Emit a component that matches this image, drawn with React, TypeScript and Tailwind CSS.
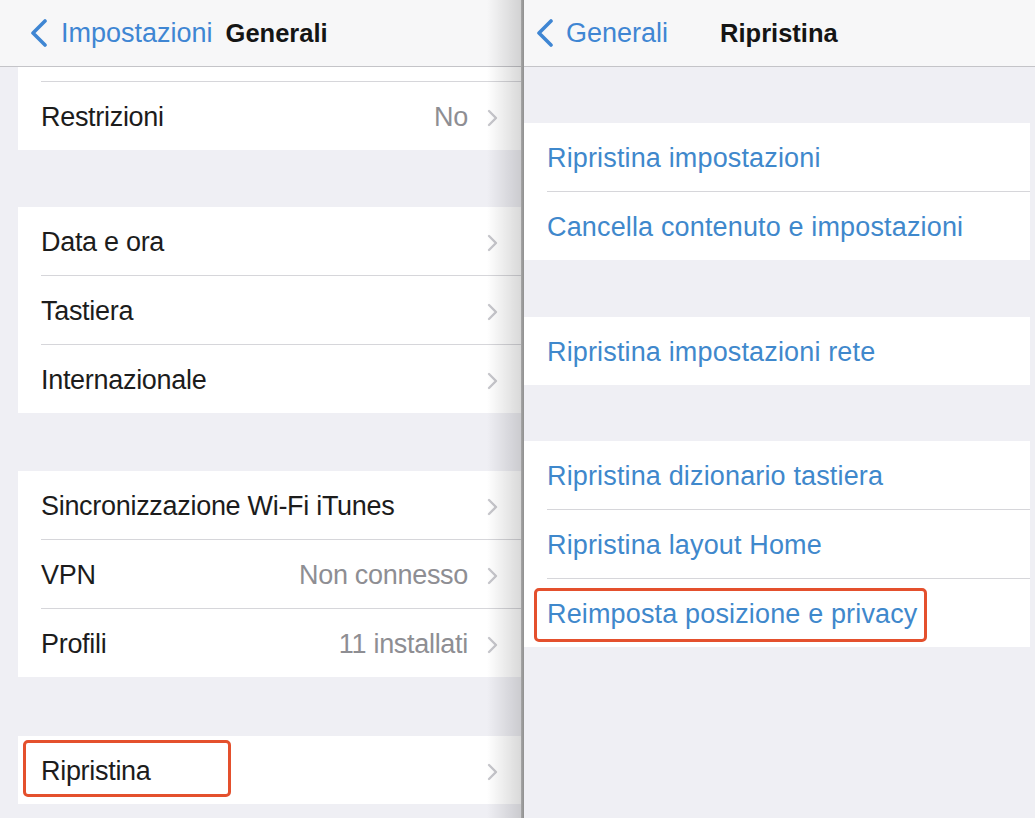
import React from 'react';

const font = { fontFamily: '"Liberation Sans", Arial, sans-serif' };

const Chevron = () => (
    <svg width="11" height="18" viewBox="0 0 11 18" className="shrink-0">
        <polyline points="2,2 9,9 2,16" fill="none" stroke="#c7c7cc" strokeWidth="2.4" strokeLinecap="round" strokeLinejoin="round" />
    </svg>
);

const BackChevron = () => (
    <svg width="18" height="28" viewBox="0 0 18 28" className="shrink-0">
        <polyline points="15,2 3,14 15,26" fill="none" stroke="#3f86d3" strokeWidth="3.6" strokeLinecap="round" strokeLinejoin="round" />
    </svg>
);

const Sep = ({ inset }: { inset: string }) => (
    <div className={`h-px bg-white ${inset}`}>
        <div className="h-px bg-[#d6d6da]" />
    </div>
);

interface RowProps {
    label: string;
    value?: string;
    boxed?: boolean;
}

const SettingRow: React.FC<RowProps> = ({ label, value, boxed }) => (
    <div className="relative flex h-[68px] items-center bg-white pl-[23px] pr-[23px] pt-[3px]">
        <span className="flex-1 text-[27px] text-[#1c1c1c] tracking-[-0.3px]">{label}</span>
        {value && <span className="mr-[19px] text-[27px] text-[#8e8e93] tracking-[-0.3px]">{value}</span>}
        <Chevron />
        {boxed && (
            <div className="absolute left-[5px] top-[4px] h-[57px] w-[208px] rounded-[5px] border-[3px] border-[#e4502d]" />
        )}
    </div>
);

const ActionRow: React.FC<RowProps> = ({ label, boxed }) => (
    <div className="relative flex h-[68px] items-center bg-white pl-[23px] pt-[2px]">
        <span className="text-[27px] text-[#3f88cc] tracking-[0.15px]">{label}</span>
        {boxed && (
            <div className="absolute left-[10px] top-[9px] h-[54px] w-[393px] rounded-[5px] border-[3px] border-[#e4502d]" />
        )}
    </div>
);

export default function App() {
    return (
        <div className="flex h-[818px] w-[1035px] overflow-hidden bg-[#efeff4]" style={font}>
            {/* left screen */}
            <div className="relative flex w-[521px] flex-col">
                <div className="flex h-[67px] items-center border-b border-[#c4c4c8] bg-[#f7f7f8] pl-[30px]">
                    <BackChevron />
                    <span className="ml-[13px] text-[27px] text-[#3f86d3]">Impostazioni</span>
                    <span className="ml-[13px] text-[25.5px] font-bold text-[#151515]">Generali</span>
                </div>
                <div className="flex flex-col pl-[18px]">
                    <div className="h-[14px] bg-white" />
                    <Sep inset="pl-[23px]" />
                    <SettingRow label="Restrizioni" value="No" />
                    <div className="h-[57px]" />
                    <SettingRow label="Data e ora" />
                    <Sep inset="pl-[23px]" />
                    <SettingRow label="Tastiera" />
                    <Sep inset="pl-[23px]" />
                    <SettingRow label="Internazionale" />
                    <div className="h-[58px]" />
                    <SettingRow label="Sincronizzazione Wi-Fi iTunes" />
                    <Sep inset="pl-[23px]" />
                    <SettingRow label="VPN" value="Non connesso" />
                    <Sep inset="pl-[23px]" />
                    <SettingRow label="Profili" value="11 installati" />
                    <div className="h-[59px]" />
                    <SettingRow label="Ripristina" boxed />
                </div>
                {/* shadow cast by the incoming screen */}
                <div className="pointer-events-none absolute right-0 top-0 h-full w-[34px] bg-gradient-to-r from-transparent to-black/15" />
            </div>
            <div className="w-[3px] bg-gradient-to-r from-[#a6a6a6] to-[#8f8f8f]" />

            {/* right screen */}
            <div className="flex flex-1 flex-col">
                <div className="relative flex h-[67px] items-center border-b border-[#c4c4c8] bg-[#f7f7f8] pl-[12px]">
                    <BackChevron />
                    <span className="ml-[12px] text-[27px] text-[#3f86d3]">Generali</span>
                    <span className="ml-[52px] text-[25.5px] font-bold text-[#151515]">Ripristina</span>
                </div>
                <div className="flex flex-col pr-[5px]">
                    <div className="h-[56px]" />
                    <ActionRow label="Ripristina impostazioni" />
                    <Sep inset="pl-[23px]" />
                    <ActionRow label="Cancella contenuto e impostazioni" />
                    <div className="h-[57px]" />
                    <ActionRow label="Ripristina impostazioni rete" />
                    <div className="h-[56px]" />
                    <ActionRow label="Ripristina dizionario tastiera" />
                    <Sep inset="pl-[23px]" />
                    <ActionRow label="Ripristina layout Home" />
                    <Sep inset="pl-[23px]" />
                    <ActionRow label="Reimposta posizione e privacy" boxed />
                </div>
            </div>
        </div>
    );
}
